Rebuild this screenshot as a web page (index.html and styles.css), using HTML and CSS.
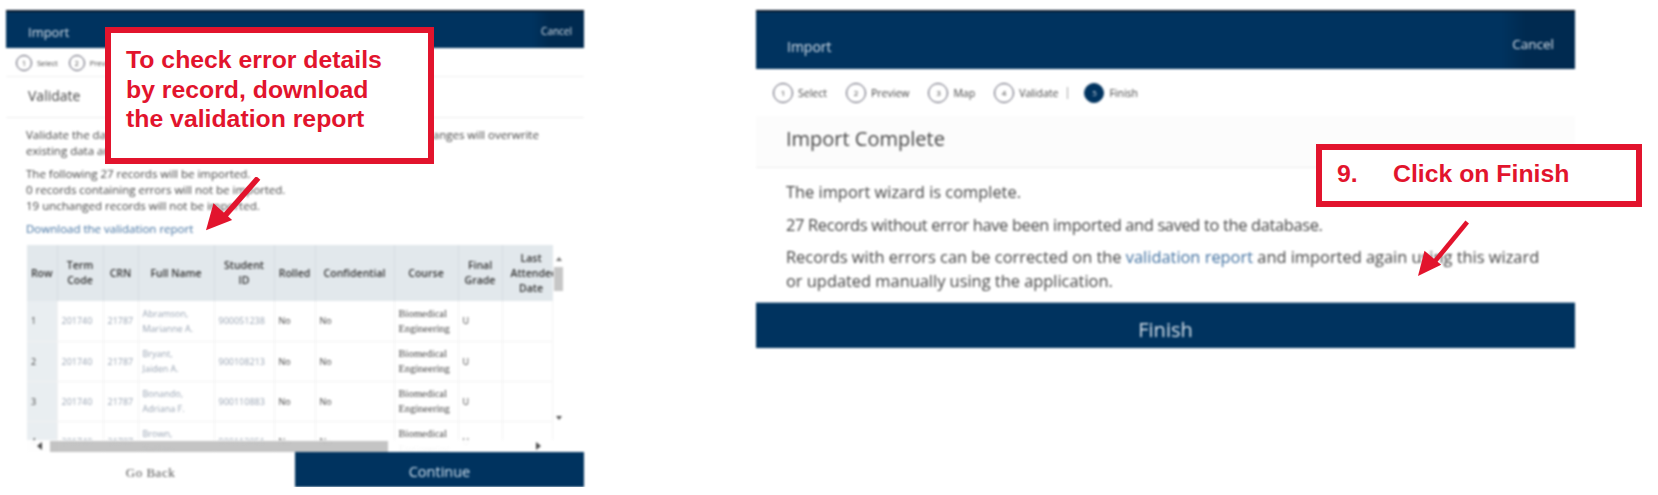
FILE: index.html
```html
<!DOCTYPE html>
<html>
<head>
    <title>Import wizard</title>
    <link rel="stylesheet" href="styles.css">
</head>
<body>
    <div class="shot shot-validate">
        <div class="panel">
            <div class="bar">
                <span class="bar-title">Import</span>
                <span class="bar-cancel">Cancel</span>
            </div>
            <div class="steps">
                <span class="step"><i class="dot">1</i>Select</span>
                <span class="step"><i class="dot">2</i>Preview</span>
            </div>
            <h2 class="title">Validate</h2>
            <div class="content">
                <p>Validate the data shown below before you continue. Any accepted record changes will overwrite<br>existing data and cannot be undone once saved.</p>
                <p>The following 27 records will be imported.<br>0 records containing errors will not be imported.<br>19 unchanged records will not be imported.</p>
                <a class="link">Download the validation report</a>
            </div>
            <div class="table-wrap">
                <table class="records">
                    <thead>
                        <tr>
                            <th>Row</th><th>Term Code</th><th>CRN</th><th>Full Name</th><th>Student<br>ID</th><th>Rolled</th><th>Confidential</th><th>Course</th><th>Final Grade</th><th>Last Attendee Date</th>
                        </tr>
                    </thead>
                    <tbody>
                        <tr>
                            <td>1</td><td class="faint">201740</td><td class="faint">21787</td><td class="faint">Abramson,<br>Marianne A.</td><td class="faint">900051238</td><td>No</td><td>No</td><td>Biomedical Engineering</td><td>U</td><td></td>
                        </tr>
                        <tr>
                            <td>2</td><td class="faint">201740</td><td class="faint">21787</td><td class="faint">Bryant,<br>Jaiden A.</td><td class="faint">900108213</td><td>No</td><td>No</td><td>Biomedical Engineering</td><td>U</td><td></td>
                        </tr>
                        <tr>
                            <td>3</td><td class="faint">201740</td><td class="faint">21787</td><td class="faint">Bonando,<br>Adriana F.</td><td class="faint">900110883</td><td>No</td><td>No</td><td>Biomedical Engineering</td><td>U</td><td></td>
                        </tr>
                        <tr>
                            <td>4</td><td class="faint">201740</td><td class="faint">21787</td><td class="faint">Brown,<br>Nathan</td><td class="faint">900113051</td><td>No</td><td>No</td><td>Biomedical Engineering</td><td>U</td><td></td>
                        </tr>
                    </tbody>
                </table>
                <div class="vscroll">
                    <span class="arrow-up"></span>
                    <span class="vthumb"></span>
                    <span class="arrow-down"></span>
                </div>
                <div class="hscroll">
                    <span class="arrow-left"></span>
                    <span class="hthumb"></span>
                    <span class="arrow-right"></span>
                </div>
            </div>
            <div class="actions">
                <span class="back">Go Back</span>
                <span class="continue">Continue</span>
            </div>
        </div>
        <div class="callout callout-report">To check error details<br>by record, download<br>the validation report</div>
        <svg class="pointer pointer-report" viewBox="0 0 60 60">
            <path d="M56 1 L18 44" stroke="#e2142d" stroke-width="6" fill="none"/>
            <path d="M0 57 L8 28 L28 46 Z" fill="#e2142d"/>
        </svg>
    </div>

    <div class="shot shot-finish">
        <div class="panel">
            <div class="bar">
                <span class="bar-title">Import</span>
                <span class="bar-cancel">Cancel</span>
            </div>
            <div class="steps">
                <span class="step"><i class="dot">1</i>Select</span>
                <span class="step"><i class="dot">2</i>Preview</span>
                <span class="step"><i class="dot">3</i>Map</span>
                <span class="step"><i class="dot">4</i>Validate</span>
                <span class="step-sep"></span>
                <span class="step step-on"><i class="dot">5</i>Finish</span>
            </div>
            <h2 class="title">Import Complete</h2>
            <div class="content">
                <p>The import wizard is complete.</p>
                <p class="tight">27 Records without error have been imported and saved to the database.</p>
                <p>Records with errors can be corrected on the <a class="link">validation report</a> and imported again using this wizard<br>or updated manually using the application.</p>
            </div>
            <div class="finish">Finish</div>
        </div>
        <div class="callout callout-finish"><span class="num">9.</span>Click on Finish</div>
        <svg class="pointer pointer-finish" viewBox="0 0 56 60">
            <path d="M53 1 L16 46" stroke="#e2142d" stroke-width="5" fill="none"/>
            <path d="M0 59 L7 32 L25 47 Z" fill="#e2142d"/>
        </svg>
    </div>
</body>
</html>
```

FILE: styles.css
```css
body {
    margin: 0;
    background: #fff;
    display: flex;
    align-items: flex-start;
    font-family: 'Open Sans', sans-serif;
    color: #444;
}

.shot {
    position: relative;
    margin-top: 10px;
}

.shot-validate {
    width: 578px;
    margin-left: 6px;
}

.shot-finish {
    width: 819px;
    margin-left: 172px;
}

.panel {
    display: flex;
    flex-direction: column;
}

.shot-validate .panel {
    filter: blur(1px);
}

.shot-finish .panel {
    filter: blur(0.8px);
}

.bar {
    display: flex;
    justify-content: space-between;
    align-items: center;
    background: linear-gradient(90deg, #00335f 91%, #002a50 94%);
    border-top: 2px solid #0b1a2c;
    box-sizing: border-box;
    color: #d5e0ea;
}

.shot-validate .bar {
    height: 38px;
    padding: 4px 12px 0 22px;
    font-size: 13px;
}

.shot-finish .bar {
    height: 59px;
    padding: 11px 21px 0 31px;
    font-size: 14px;
}

.shot-validate .bar-cancel {
    font-size: 10px;
    padding-bottom: 2px;
}

.shot-finish .bar-cancel {
    font-size: 13.5px;
    padding-bottom: 5px;
}

.steps {
    display: flex;
    align-items: center;
    box-sizing: border-box;
    border-bottom: 1px solid #f1f1f1;
}

.shot-validate .steps {
    height: 29px;
    padding: 2px 0 0 10px;
    gap: 11px;
    font-size: 7.5px;
}

.shot-finish .steps {
    height: 47px;
    padding-left: 17px;
    gap: 19px;
    border-bottom: 0;
    font-size: 10.5px;
}

.step {
    display: flex;
    align-items: center;
    gap: 5px;
}

.dot {
    display: flex;
    justify-content: center;
    align-items: center;
    box-sizing: border-box;
    width: 16px;
    height: 16px;
    border: 1px solid #556;
    border-radius: 50%;
    font-style: normal;
    font-size: 7px;
}

.shot-finish .dot {
    width: 20px;
    height: 20px;
    font-size: 8px;
}

.step-sep {
    width: 1px;
    height: 12px;
    margin: 0 -3px 0 -10px;
    background: #aaa;
}

.step-on .dot {
    background: #00335f;
    border-color: #00335f;
    color: #cfd9e3;
}

.title {
    margin: 0;
    font-weight: 400;
    box-sizing: border-box;
    border-bottom: 1px solid #eee;
    display: flex;
    align-items: center;
}

.shot-validate .title {
    height: 41px;
    padding: 0 0 4px 22px;
    font-size: 14px;
}

.shot-finish .title {
    height: 52px;
    padding: 0 0 6px 30px;
    font-size: 20px;
    background: #fcfcfc;
}

.content p {
    margin: 0;
}

.shot-validate .content {
    height: 127px;
    box-sizing: border-box;
    padding: 9px 20px 0 20px;
    font-size: 11.5px;
    line-height: 16px;
    white-space: nowrap;
}

.shot-validate .content p {
    margin-bottom: 7px;
}

.shot-validate .content .link {
    display: block;
    margin-top: 5px;
}

.shot-finish .content {
    height: 134px;
    box-sizing: border-box;
    padding: 12px 30px 0 30px;
    font-size: 16.4px;
    line-height: 23.5px;
    white-space: nowrap;
}

.shot-finish .content p {
    margin-bottom: 9px;
}

.shot-finish .content .tight {
    letter-spacing: -0.33px;
}

.link {
    color: #3f6f9f;
}

.table-wrap {
    position: relative;
    height: 207px;
    margin-left: 21px;
    width: 537px;
    overflow: hidden;
}

.records {
    width: 526px;
    table-layout: fixed;
    border-collapse: collapse;
    font-size: 10.5px;
    line-height: 15px;
}

.records th {
    box-sizing: border-box;
    height: 56px;
    padding: 0 1px;
    background: #e2e8ec;
    border-right: 1px solid #d5dde2;
    font-weight: 600;
    color: #333;
    text-align: center;
}

.records th:last-child {
    padding-left: 8px;
    border-right: 0;
}

.records td {
    height: 40px;
    padding: 0 4px;
    box-sizing: border-box;
    border-right: 1px solid #f2f2f2;
    border-bottom: 1px solid #f2f2f2;
    font-size: 9px;
}

.records td:first-child {
    background: #e9eef1;
}

.records td:nth-child(8) {
    font-family: 'Liberation Serif', serif;
    font-size: 10.5px;
}

.faint {
    color: #98a3b2;
}

.records th:nth-child(1) { width: 30px; }
.records th:nth-child(2) { width: 46px; }
.records th:nth-child(3) { width: 35px; }
.records th:nth-child(4) { width: 76px; }
.records th:nth-child(5) { width: 60px; }
.records th:nth-child(6) { width: 41px; }
.records th:nth-child(7) { width: 79px; }
.records th:nth-child(8) { width: 64px; }
.records th:nth-child(9) { width: 44px; }

.vscroll {
    position: absolute;
    top: 0;
    right: 0;
    bottom: 12px;
    width: 11px;
    display: flex;
    flex-direction: column;
    align-items: center;
    padding-top: 12px;
    box-sizing: border-box;
    background: #fff;
}

.vthumb {
    width: 9px;
    height: 24px;
    margin-top: 6px;
    background: #c6c6c6;
}

.arrow-up, .arrow-down {
    width: 0;
    height: 0;
    border-left: 3px solid transparent;
    border-right: 3px solid transparent;
}

.arrow-up {
    border-bottom: 4px solid #777;
}

.arrow-down {
    margin-top: auto;
    margin-bottom: 20px;
    border-top: 4px solid #555;
}

.hscroll {
    position: absolute;
    left: 0;
    right: 0;
    bottom: 0;
    height: 12px;
    display: flex;
    align-items: center;
    background: #fff;
    opacity: 0.96;
}

.hthumb {
    width: 338px;
    height: 11px;
    margin-left: 9px;
    background: #c2c2c2;
}

.arrow-left, .arrow-right {
    width: 0;
    height: 0;
    border-top: 4px solid transparent;
    border-bottom: 4px solid transparent;
}

.arrow-left {
    margin-left: 10px;
    margin-right: -1px;
    border-right: 5px solid #444;
}

.arrow-right {
    margin-left: 148px;
    border-left: 5px solid #444;
}

.actions {
    display: flex;
    height: 35px;
}

.back {
    width: 289px;
    text-align: center;
    line-height: 42px;
    font-family: 'Liberation Serif', serif;
    font-size: 13px;
    letter-spacing: 0.5px;
    color: #555;
}

.continue {
    flex: 1;
    background: #00335f;
    color: #cfe0ee;
    text-align: center;
    line-height: 40px;
    font-size: 14.5px;
}

.finish {
    height: 46px;
    line-height: 54px;
    background: #00335f;
    color: #d5e0ea;
    text-align: center;
    font-size: 20px;
    border-top: 1px solid #9db4c8;
    box-sizing: border-box;
}

.callout {
    position: absolute;
    box-sizing: border-box;
    background: #fff;
    border: 6px solid #e2142d;
    color: #e2142d;
    font-family: 'Liberation Sans', sans-serif;
    font-weight: 700;
    font-size: 24.8px;
}

.callout-report {
    left: 99px;
    top: 17px;
    width: 329px;
    height: 137px;
    padding: 12px 15px;
    line-height: 29.5px;
}

.callout-finish {
    left: 560px;
    top: 134px;
    width: 326px;
    height: 63px;
    padding: 9px 15px;
    line-height: 30px;
}

.num {
    display: inline-block;
    width: 56px;
}

.pointer {
    position: absolute;
}

.pointer-report {
    left: 200px;
    top: 167px;
    width: 56px;
    height: 56px;
}

.pointer-finish {
    left: 662px;
    top: 210px;
    width: 52px;
    height: 58px;
}
```
